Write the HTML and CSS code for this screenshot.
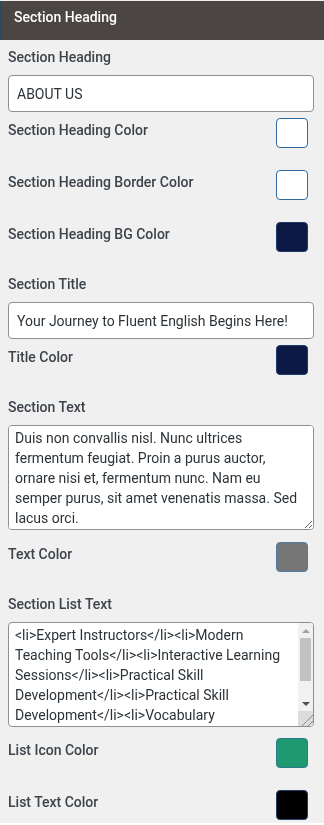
FILE: index.html
```html
<!DOCTYPE html>
<html>
<head>
<meta charset="utf-8">
<link rel="stylesheet" href="styles.css">
</head>
<body>
<div class="panel">
  <div class="panel-header">Section Heading</div>
  <div class="panel-body">
    <label class="field-label first">Section Heading</label>
    <input class="text-input" type="text" value="ABOUT US">

    <div class="color-row"><span class="color-label">Section Heading Color</span><span class="swatch swatch-white"></span></div>
    <div class="color-row"><span class="color-label">Section Heading Border Color</span><span class="swatch swatch-white"></span></div>
    <div class="color-row"><span class="color-label">Section Heading BG Color</span><span class="swatch swatch-navy"></span></div>

    <label class="field-label">Section Title</label>
    <input class="text-input" type="text" value="Your Journey to Fluent English Begins Here!">

    <div class="color-row"><span class="color-label">Title Color</span><span class="swatch swatch-navy"></span></div>

    <label class="field-label">Section Text</label>
    <textarea class="text-area">Duis non convallis nisl. Nunc ultrices fermentum feugiat. Proin a purus auctor, ornare nisi et, fermentum nunc. Nam eu semper purus, sit amet venenatis massa. Sed lacus orci.</textarea>

    <div class="color-row"><span class="color-label">Text Color</span><span class="swatch swatch-gray"></span></div>

    <label class="field-label">Section List Text</label>
    <div class="list-box">
      <textarea class="list-input">&lt;li&gt;Expert Instructors&lt;/li&gt;&lt;li&gt;Modern Teaching Tools&lt;/li&gt;&lt;li&gt;Interactive Learning Sessions&lt;/li&gt;&lt;li&gt;Practical Skill Development&lt;/li&gt;&lt;li&gt;Practical Skill Development&lt;/li&gt;&lt;li&gt;Vocabulary Building&lt;/li&gt;&lt;li&gt;Grammar Mastery&lt;/li&gt;&lt;li&gt;Pronunciation Practice&lt;/li&gt;&lt;li&gt;Conversation Clubs&lt;/li&gt;&lt;li&gt;Flexible Schedules&lt;/li&gt;</textarea>
      <div class="scrollbar">
        <span class="sb-button"><span class="arrow-up"></span></span>
        <span class="sb-track"><span class="sb-thumb"></span></span>
        <span class="sb-button"><span class="arrow-down"></span></span>
        <span class="sb-corner"></span>
      </div>
    </div>

    <div class="color-row"><span class="color-label">List Icon Color</span><span class="swatch swatch-green"></span></div>
    <div class="color-row last"><span class="color-label">List Text Color</span><span class="swatch swatch-black"></span></div>
  </div>
</div>
</body>
</html>
```
FILE: styles.css
```css
html, body {
  margin: 0;
  padding: 0;
  background: #ffffff;
}
body {
  font-family: Roboto, "Liberation Sans", sans-serif;
  font-size: 14px;
}
.panel {
  width: 324px;
  height: 823px;
  background: #f0f0f0;
  overflow: hidden;
}
.panel-header {
  height: 39px;
  box-sizing: border-box;
  margin-top: 1px;
  background: #4b4644;
  border-left: 2px solid #2d4a5e;
  color: #ffffff;
  font-weight: 500;
  font-size: 14px;
  line-height: 20px;
  padding: 6px 12px;
}
.panel-body {
  padding: 0 10px 0 8px;
}
.field-label {
  display: block;
  color: #3c434a;
  font-weight: 500;
  line-height: 20px;
  margin-bottom: 8px;
}
.field-label.first {
  margin-top: 7px;
}
.text-input {
  display: block;
  box-sizing: border-box;
  width: 100%;
  height: 37px;
  margin: 0 0 6px 0;
  padding: 0 8px;
  border: 1px solid #8c8f94;
  border-radius: 4px;
  background: #ffffff;
  color: #2c3338;
  font-family: Roboto, "Liberation Sans", sans-serif;
  font-size: 14px;
  outline: none;
}
.text-area {
  display: block;
  box-sizing: border-box;
  width: 100%;
  height: 105px;
  margin: 0 0 12px 0;
  padding: 2px 6px;
  border: 1px solid #8c8f94;
  border-radius: 4px;
  background: #ffffff;
  color: #2c3338;
  font-family: Roboto, "Liberation Sans", sans-serif;
  font-size: 14px;
  line-height: 20px;
  resize: both;
  outline: none;
}
.list-box {
  display: flex;
  box-sizing: border-box;
  height: 105px;
  margin-bottom: 11px;
  border: 1px solid #8c8f94;
  border-radius: 4px;
  background: #ffffff;
  overflow: hidden;
}
.list-input {
  flex: 1;
  min-width: 0;
  box-sizing: border-box;
  height: 100%;
  margin: 0;
  padding: 2px 6px;
  border: none;
  background: transparent;
  color: #2c3338;
  font-family: Roboto, "Liberation Sans", sans-serif;
  font-size: 14px;
  line-height: 20px;
  resize: none;
  overflow: hidden;
  outline: none;
}
.scrollbar {
  display: flex;
  flex-direction: column;
  width: 15px;
  flex: none;
  background: #f1f1f1;
}
.sb-button {
  display: flex;
  align-items: center;
  justify-content: center;
  height: 15px;
  flex: none;
}
.arrow-up {
  width: 0;
  height: 0;
  border-left: 4px solid transparent;
  border-right: 4px solid transparent;
  border-bottom: 4px solid #a3a3a3;
}
.arrow-down {
  width: 0;
  height: 0;
  border-left: 4px solid transparent;
  border-right: 4px solid transparent;
  border-top: 4px solid #505050;
}
.sb-track {
  flex: 1;
  display: flex;
  flex-direction: column;
  padding: 0 2px;
}
.sb-thumb {
  height: 43px;
  background: #c1c1c1;
}
.sb-corner {
  height: 15px;
  flex: none;
  background:
    linear-gradient(135deg, transparent 0 13px, #8a8a8a 13px 14px, transparent 14px 17px, #8a8a8a 17px 18px, transparent 18px),
    #dcdcdc;
}
.color-row {
  display: flex;
  justify-content: space-between;
  align-items: flex-start;
  height: 30px;
  margin-bottom: 22px;
}
.color-label {
  color: #3c434a;
  font-weight: 500;
  line-height: 24px;
}
.swatch {
  box-sizing: border-box;
  width: 32px;
  height: 30px;
  margin-right: 6px;
  border: 1px solid #2f6a9e;
  border-radius: 4px;
}
.swatch-white { background: #ffffff; }
.swatch-navy { background: #0b1944; border-color: #1d3a66; }
.swatch-gray { background: #767676; border-color: #4d7ba6; }
.swatch-green { background: #1f9a70; border-color: #2a7a8a; }
.swatch-black { background: #000000; border-color: #1f3f66; }
```
